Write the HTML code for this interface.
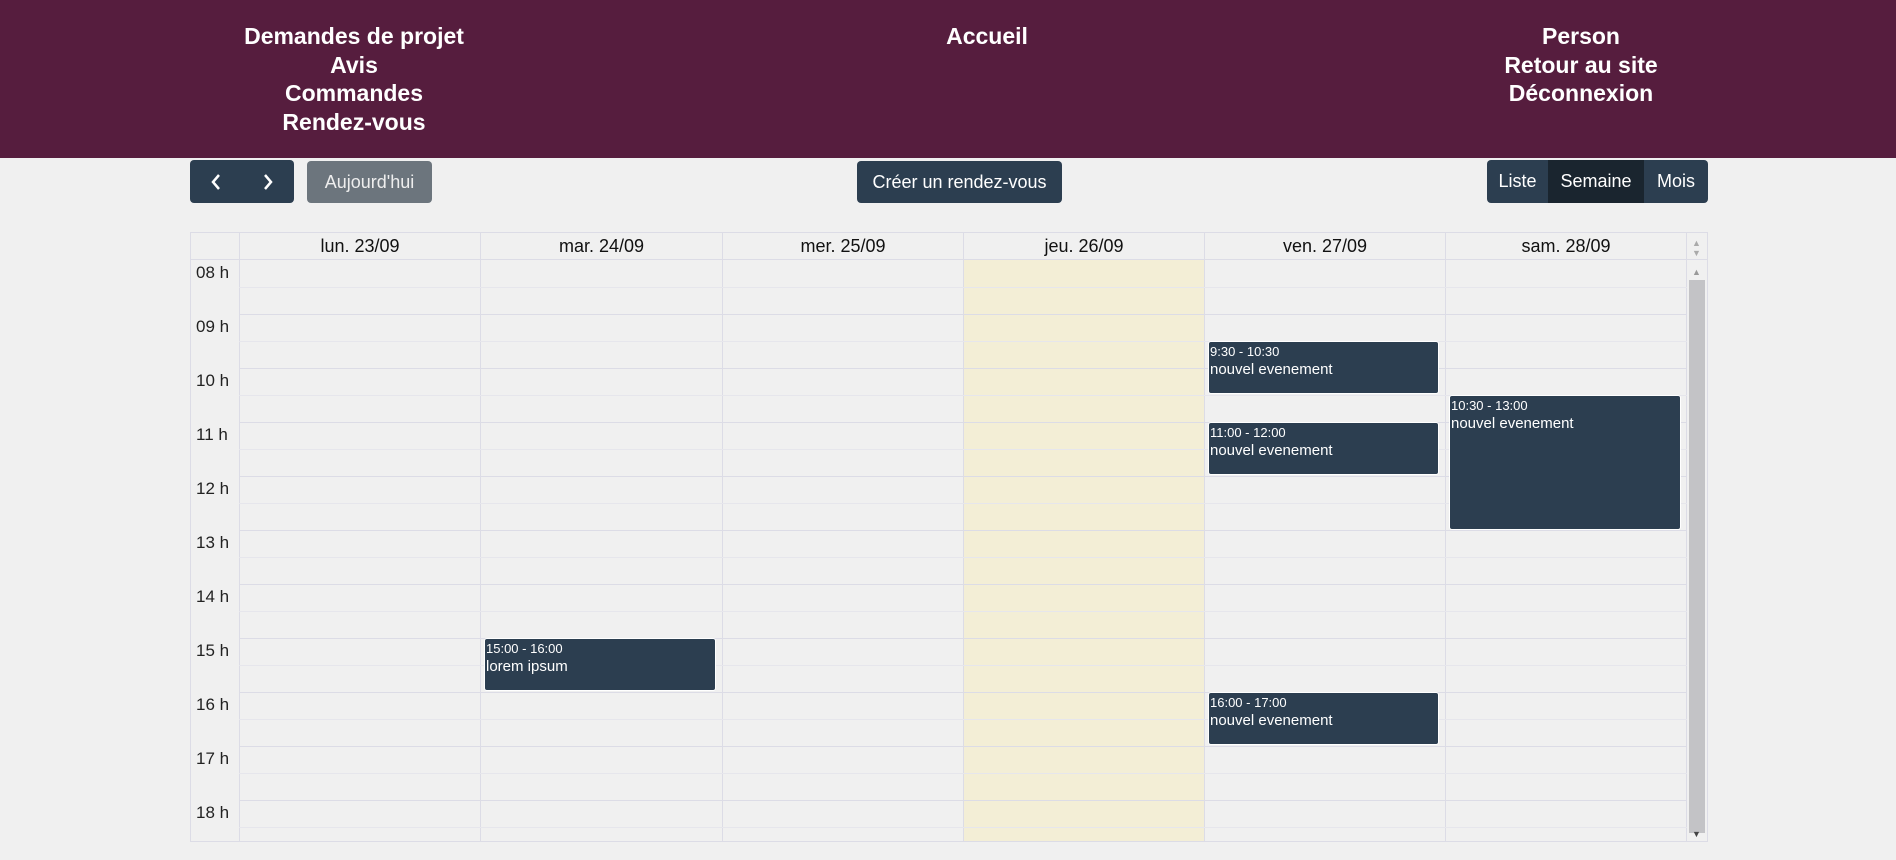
<!DOCTYPE html>
<html><head><meta charset="utf-8"><style>
*{box-sizing:border-box;margin:0;padding:0}
body{width:1896px;height:860px;background:#f0f0f0;font-family:"Liberation Sans",sans-serif;position:relative;overflow:hidden}
.hdr{position:absolute;left:0;top:0;width:1896px;height:158px;background:#561d3e}
.nav{position:absolute;top:22px;color:#fff;font-weight:bold;font-size:23px;line-height:28.5px;text-align:center;width:400px}
.btn{position:absolute;color:#fff;font-size:18px;display:flex;align-items:center;justify-content:center;border-radius:4px}
.dk{background:#2c3e50}
.cal{position:absolute;left:190px;top:232px;width:1518px;height:610px;border:1px solid #dcdce6;overflow:hidden}
.dh{position:absolute;top:0;height:27px;font-size:18px;text-align:center;line-height:27px;color:#111;border-left:1px solid #dcdce6}
.vl{position:absolute;top:27px;bottom:0;width:1px;background:#dcdce6}
.hl{position:absolute;left:48px;width:1448px;height:1px;background:#dcdce6}
.hl.h{background:#e6e6ec}
.tl{position:absolute;left:5px;font-size:17px;color:#222}
.ev{position:absolute;background:#2c3e50;color:#fff;border-radius:3px;border:1px solid #fff;padding:1px 1px;font-size:15px;line-height:19px}
.ev small{font-size:13px;display:block;line-height:16px;margin-top:1px}
</style></head><body>
<div class="hdr"></div>
<div class="nav" style="left:154px">Demandes de projet<br>Avis<br>Commandes<br>Rendez-vous</div>
<div class="nav" style="left:787px">Accueil</div>
<div class="nav" style="left:1381px">Person<br>Retour au site<br>Déconnexion</div>

<div class="btn dk" style="left:190px;top:160px;width:104px;height:43px;justify-content:space-around;font-size:22px">
<svg width="14" height="20" viewBox="0 0 14 20"><path d="M10 3 L4 10 L10 17" stroke="#fff" stroke-width="2.5" fill="none"/></svg>
<svg width="14" height="20" viewBox="0 0 14 20"><path d="M4 3 L10 10 L4 17" stroke="#fff" stroke-width="2.5" fill="none"/></svg></div>
<div class="btn" style="left:307px;top:161px;width:125px;height:42px;background:#6c757d;color:#eee">Aujourd'hui</div>
<div class="btn dk" style="left:857px;top:161px;width:205px;height:42px">Créer un rendez-vous</div>
<div class="btn dk" style="left:1487px;top:160px;width:221px;height:43px"></div>
<div class="btn" style="left:1487px;top:160px;width:61px;height:43px">Liste</div>
<div class="btn" style="left:1548px;top:160px;width:96px;height:43px;background:#1a252f;border-radius:0">Semaine</div>
<div class="btn" style="left:1644px;top:160px;width:64px;height:43px">Mois</div>

<div class="cal">
<div style="position:absolute;left:772px;top:27px;width:241px;height:600px;background:#f3eed6"></div>
<div class="dh" style="left:48px;width:241px">lun. 23/09</div>
<div class="dh" style="left:289px;width:242px">mar. 24/09</div>
<div class="dh" style="left:531px;width:241px">mer. 25/09</div>
<div class="dh" style="left:772px;width:241px">jeu. 26/09</div>
<div class="dh" style="left:1013px;width:241px">ven. 27/09</div>
<div class="dh" style="left:1254px;width:242px;border-right:1px solid #dcdce6">sam. 28/09</div>
<div style="position:absolute;left:0;top:26px;width:1518px;height:1px;background:#dcdce6"></div>
<div class="vl" style="left:48px"></div><div class="vl" style="left:289px"></div><div class="vl" style="left:531px"></div><div class="vl" style="left:772px"></div><div class="vl" style="left:1013px"></div><div class="vl" style="left:1254px"></div><div class="vl" style="left:1495px"></div>
<div class="hl h" style="top:54px"></div><div class="hl" style="top:81px"></div>
<div class="hl h" style="top:108px"></div><div class="hl" style="top:135px"></div>
<div class="hl h" style="top:162px"></div><div class="hl" style="top:189px"></div>
<div class="hl h" style="top:216px"></div><div class="hl" style="top:243px"></div>
<div class="hl h" style="top:270px"></div><div class="hl" style="top:297px"></div>
<div class="hl h" style="top:324px"></div><div class="hl" style="top:351px"></div>
<div class="hl h" style="top:378px"></div><div class="hl" style="top:405px"></div>
<div class="hl h" style="top:432px"></div><div class="hl" style="top:459px"></div>
<div class="hl h" style="top:486px"></div><div class="hl" style="top:513px"></div>
<div class="hl h" style="top:540px"></div><div class="hl" style="top:567px"></div>
<div class="hl h" style="top:594px"></div>
<div class="tl" style="top:30px">08 h</div><div class="tl" style="top:84px">09 h</div><div class="tl" style="top:138px">10 h</div><div class="tl" style="top:192px">11 h</div><div class="tl" style="top:246px">12 h</div><div class="tl" style="top:300px">13 h</div><div class="tl" style="top:354px">14 h</div><div class="tl" style="top:408px">15 h</div><div class="tl" style="top:462px">16 h</div><div class="tl" style="top:516px">17 h</div><div class="tl" style="top:570px">18 h</div>
<div class="ev" style="left:1017px;top:108px;width:231px;height:53px"><small>9:30 - 10:30</small>nouvel evenement</div>
<div class="ev" style="left:1017px;top:189px;width:231px;height:53px"><small>11:00 - 12:00</small>nouvel evenement</div>
<div class="ev" style="left:1017px;top:459px;width:231px;height:53px"><small>16:00 - 17:00</small>nouvel evenement</div>
<div class="ev" style="left:1258px;top:162px;width:232px;height:135px"><small>10:30 - 13:00</small>nouvel evenement</div>
<div class="ev" style="left:293px;top:405px;width:232px;height:53px"><small>15:00 - 16:00</small>lorem ipsum</div>
<div style="position:absolute;left:1498px;top:47px;width:16px;height:553px;background:#c3c3c6"></div>
<div style="position:absolute;left:1501px;top:5px;color:#aaa;font-size:9px;line-height:10px">▲<br>▼</div>
<div style="position:absolute;left:1501px;top:34px;color:#999;font-size:9px">▲</div>
<div style="position:absolute;left:1501px;top:596px;color:#444;font-size:9px">▼</div>
</div>
</body></html>
